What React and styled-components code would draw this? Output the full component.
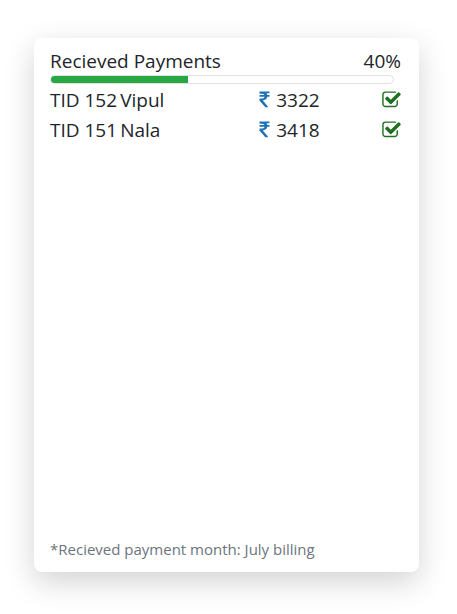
import React from 'react';
import styled, { createGlobalStyle } from 'styled-components';

const GlobalStyle = createGlobalStyle`
  *, *::before, *::after { box-sizing: border-box; }
  body {
    margin: 0;
    background: #fff;
    color: #212529;
    font-family: "Segoe UI", "Open Sans", "Noto Sans", sans-serif;
    font-size: 19px;
    line-height: 30px;
  }
`;

const Page = styled.main`
  display: flex;
  min-height: 100vh;
  padding: 38px 38px 42px 34px;
`;

const Card = styled.section`
  flex: 1;
  min-width: 0;
  display: flex;
  flex-direction: column;
  padding: 10px 18px 8px 16px;
  border-radius: 8px;
  background: #fff;
  box-shadow: 0 10px 30px rgba(0, 0, 0, 0.175);
`;

const Header = styled.header`
  display: flex;
  justify-content: space-between;
  line-height: 27px;
`;

const Title = styled.h1`
  margin: 0;
  font-size: inherit;
  font-weight: 400;
`;

const Track = styled.div`
  height: 9px;
  margin-right: 7px;
  border: 1px solid #dee2e6;
  border-radius: 5px;
  overflow: hidden;
`;

const Bar = styled.div`
  width: ${({ $value }) => $value}%;
  height: 100%;
  background: #28a745;
`;

const Table = styled.table`
  width: 100%;
  margin-top: 1px;
  table-layout: fixed;
  border-collapse: collapse;
`;

const Cell = styled.td`
  width: ${({ $width }) => $width || 'auto'};
  height: 30px;
  padding: 0;
  text-align: ${({ $align }) => $align || 'left'};
  white-space: nowrap;
`;

const Amount = styled.span`
  display: flex;
  align-items: center;
  gap: 6px;
`;

const Icon = styled.svg`
  display: block;
  height: 20px;
  fill: currentColor;
`;

const RupeeIcon = styled(Icon)`
  width: 11px;
  color: #1f73b7;
`;

const CheckIcon = styled(Icon)`
  width: 19px;
  margin-left: auto;
  color: #1e7020;
`;

const Note = styled.footer`
  margin-top: auto;
  color: #6c757d;
  font-size: 15px;
`;

const payments = [
  { id: 'TID 152', name: 'Vipul', amount: 3322 },
  { id: 'TID 151', name: 'Nala', amount: 3418 },
];

function Rupee() {
  return (
    <RupeeIcon viewBox="403 0 986 1792" aria-label="Rupees">
      <path d="M1345 470v102q0 14-9 23t-23 9h-168q-23 144-129 234t-276 110q167 178 459 536 14 16 4 34-8 18-29 18h-195q-16 0-25-12-306-367-498-571-9-9-9-22v-127q0-13 9.500-22.500t22.500-9.500h112q132 0 212.500-43t102.500-125h-427q-14 0-23-9t-9-23v-102q0-14 9-23t23-9h413q-57-113-268-113h-145q-13 0-22.500-9.500t-9.500-22.500v-133q0-14 9-23t23-9h832q14 0 23 9t9 23v102q0 14-9 23t-23 9h-233q47 61 64 144h171q14 0 23 9t9 23z" />
    </RupeeIcon>
  );
}

function Check() {
  return (
    <CheckIcon viewBox="44 0 1702 1792" aria-label="Received">
      <path d="M1472 930v318q0 119-84.500 203.500t-203.500 84.500h-832q-119 0-203.500-84.500t-84.500-203.500v-832q0-119 84.500-203.500t203.500-84.500h832q63 0 117 25 15 7 18 23 3 17-9 29l-49 49q-10 10-23 10-3 0-9-2-23-6-45-6h-832q-66 0-113 47t-47 113v832q0 66 47 113t113 47h832q66 0 113-47t47-113v-254q0-13 9-22l64-64q10-10 23-10 6 0 12 3 20 8 20 29zm231-489l-814 814q-24 24-57 24t-57-24l-430-430q-24-24-24-57t24-57l110-110q24-24 57-24t57 24l263 263 647-647q24-24 57-24t57 24l110 110q24 24 24 57t-24 57z" />
    </CheckIcon>
  );
}

export default function App() {
  const progress = 40;
  return (
    <>
      <GlobalStyle />
      <Page>
        <Card>
          <Header>
            <Title>Recieved Payments</Title>
            <span>{progress}%</span>
          </Header>
          <Track
            role="progressbar"
            aria-label="Recieved Payments"
            aria-valuenow={progress}
            aria-valuemin={0}
            aria-valuemax={100}
          >
            <Bar $value={progress} />
          </Track>
          <Table aria-label="Recieved Payments">
            <tbody>
              {payments.map((p) => (
                <tr key={p.id}>
                  <Cell $width="20%">{p.id}</Cell>
                  <Cell $width="139px">{p.name}</Cell>
                  <Cell $width="30%">
                    <Amount>
                      <Rupee />
                      {p.amount}
                    </Amount>
                  </Cell>
                  <Cell $align="right">
                    <Check />
                  </Cell>
                </tr>
              ))}
            </tbody>
          </Table>
          <Note>*Recieved payment month: July billing</Note>
        </Card>
      </Page>
    </>
  );
}
